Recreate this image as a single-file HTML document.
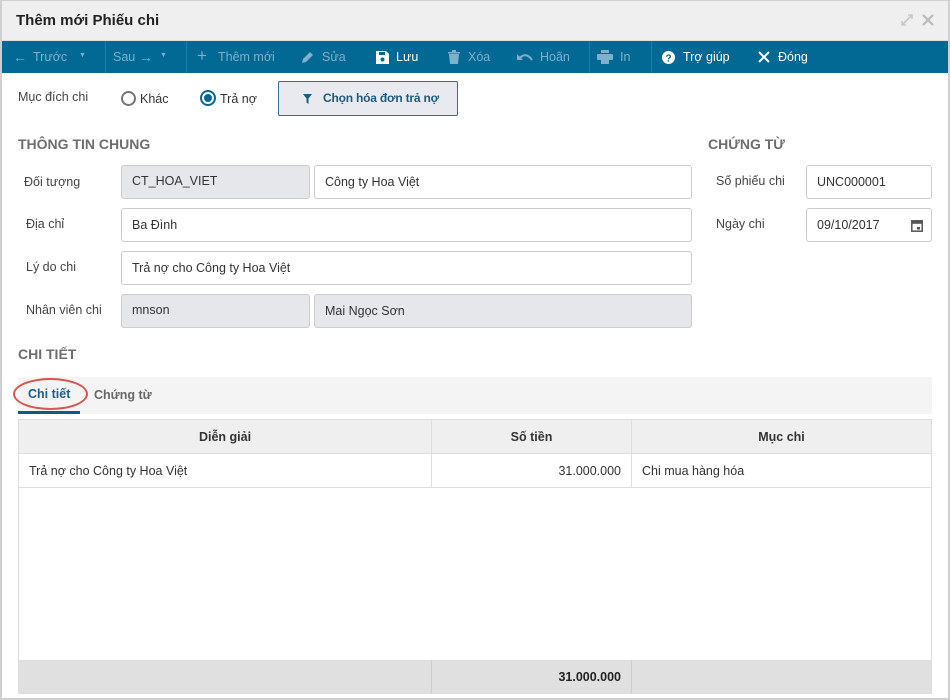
<!DOCTYPE html>
<html><head><meta charset="utf-8"><style>
*{box-sizing:border-box;margin:0;padding:0}
body{width:950px;height:700px;background:#fff;font-family:"Liberation Sans",Arial,sans-serif;font-size:12.5px;color:#333;position:relative;overflow:hidden}
.abs{position:absolute}
.win{position:absolute;left:0;top:0;width:950px;height:700px;border:2px solid #cfcfcf;border-top:1px solid #cfcfcf}
.title{left:2px;top:1px;width:946px;height:40px;background:#efefef;border-bottom:1px solid #ddd}
.title span{position:absolute;left:14px;top:11px;font-size:15px;font-weight:bold;color:#222}
.tb{left:2px;top:41px;width:946px;height:32px;background:#026894}
.tb .i{position:absolute;top:9px;font-size:12.5px;color:#7eb2cc;white-space:nowrap}
.tb .w{color:#fff}
.sep{position:absolute;top:0;width:1px;height:32px;background:#1d7ea7}
.inp{position:absolute;height:34px;border:1px solid #ccc;border-radius:3px;background:#fff;padding:0 10px;line-height:32px;font-size:12.5px;color:#333}
.dis{background:#e6e7eb}
.lbl{position:absolute;font-size:12.5px;color:#444}
.h{position:absolute;font-size:14px;font-weight:bold;color:#6e6e6e}
table{position:absolute;left:18px;top:419px;width:914px;border-collapse:collapse;font-size:12.5px}
td,th{border:1px solid #ddd;height:34px;padding:0 10px}
th{background:#efefef;font-weight:bold;color:#333}
</style></head><body>
<div class="win"></div>
<div class="abs title"><span>Thêm mới Phiếu chi</span>
<svg class="abs" style="left:898px;top:12px" width="14" height="14" viewBox="0 0 14 14"><path d="M2 12L12 2M8 2h4v4M2 8v4h4" stroke="#c8c8c8" stroke-width="1.6" fill="none"/></svg>
<svg class="abs" style="left:920px;top:13px" width="12" height="12" viewBox="0 0 12 12"><path d="M1 1L11 11M11 1L1 11" stroke="#b8b8b8" stroke-width="2"/></svg>
</div>
<div class="abs tb">
<div class="i" style="left:11px;top:8px;font-size:14px">←</div><div class="i" style="left:31px">Trước</div><div class="i" style="left:77px;top:11px;font-size:7px">▼</div>
<div class="sep" style="left:103px"></div>
<div class="i" style="left:111px">Sau</div><div class="i" style="left:137px;top:8px;font-size:14px">→</div><div class="i" style="left:158px;top:11px;font-size:7px">▼</div>
<div class="sep" style="left:184px"></div>
<div class="i" style="left:195px;font-size:17px;top:5px">+</div><div class="i" style="left:216px">Thêm mới</div>
<svg class="abs" style="left:299px;top:10px" width="13" height="13" viewBox="0 0 13 13"><path d="M1 12l1-4 7-7 3 3-7 7z" fill="#7eb2cc"/></svg><div class="i" style="left:320px">Sửa</div>
<svg class="abs" style="left:374px;top:10px" width="13" height="13" viewBox="0 0 13 13"><path d="M0 0h10l3 3v10H0z" fill="#fff"/><rect x="3" y="1" width="6" height="3" fill="#026894"/><circle cx="6.5" cy="8.5" r="2" fill="#026894"/></svg><div class="i w" style="left:394px">Lưu</div>
<svg class="abs" style="left:446px;top:9px" width="12" height="14" viewBox="0 0 12 14"><path d="M0 2h12v1.5H0zM4 0h4v2H4zM1 4h10l-1 10H2z" fill="#7eb2cc"/></svg><div class="i" style="left:466px">Xóa</div>
<svg class="abs" style="left:515px;top:11px" width="16" height="11" viewBox="0 0 16 11"><path d="M3 6c3-4 8-4 12 2" stroke="#7eb2cc" stroke-width="2" fill="none"/><path d="M0 2v6h6z" fill="#7eb2cc"/></svg><div class="i" style="left:538px">Hoãn</div>
<div class="sep" style="left:587px"></div>
<svg class="abs" style="left:595px;top:9px" width="16" height="14" viewBox="0 0 16 14"><rect x="4" y="0" width="8" height="3" fill="#7eb2cc"/><rect x="0" y="4" width="16" height="6" rx="1" fill="#7eb2cc"/><rect x="4" y="9" width="8" height="5" fill="#7eb2cc"/></svg><div class="i" style="left:618px">In</div>
<div class="sep" style="left:649px"></div>
<svg class="abs" style="left:660px;top:10px" width="13" height="13" viewBox="0 0 13 13"><circle cx="6.5" cy="6.5" r="6.5" fill="#fff"/><text x="6.5" y="10.5" font-size="10" font-weight="bold" text-anchor="middle" fill="#026894" font-family="Liberation Sans">?</text></svg><div class="i w" style="left:681px">Trợ giúp</div>
<svg class="abs" style="left:756px;top:10px" width="12" height="12" viewBox="0 0 12 12"><path d="M1 1L11 11M11 1L1 11" stroke="#fff" stroke-width="2"/></svg><div class="i w" style="left:776px">Đóng</div>
</div>
<div class="lbl" style="left:18px;top:90px">Mục đích chi</div>
<div class="abs" style="left:121px;top:91px;width:15px;height:15px;border:2px solid #777;border-radius:50%"></div>
<div class="lbl" style="left:140px;top:92px;color:#333">Khác</div>
<div class="abs" style="left:200px;top:90px;width:16px;height:16px;border:2px solid #026894;border-radius:50%"><div class="abs" style="left:2px;top:2px;width:8px;height:8px;border-radius:50%;background:#026894"></div></div>
<div class="lbl" style="left:220px;top:92px;color:#333">Trả nợ</div>
<div class="abs" style="left:278px;top:81px;width:180px;height:35px;background:#e8eaf0;border:1px solid #2f6f92;border-radius:2px;font-size:12px;font-weight:bold;color:#1d5a7e;line-height:33px;padding-left:44px;letter-spacing:-0.2px">Chọn hóa đơn trả nợ</div>
<svg class="abs" style="left:303px;top:94px" width="9" height="10" viewBox="0 0 9 10"><path d="M0 0h9L5.5 4.5V10L3.5 8.5V4.5z" fill="#1d5a7e"/></svg>
<div class="h" style="left:18px;top:136px">THÔNG TIN CHUNG</div>
<div class="h" style="left:708px;top:136px">CHỨNG TỪ</div>
<div class="lbl" style="left:24px;top:175px">Đối tượng</div>
<div class="inp dis" style="left:121px;top:165px;width:189px;line-height:30px">CT_HOA_VIET</div>
<div class="inp" style="left:314px;top:165px;width:378px">Công ty Hoa Việt</div>
<div class="lbl" style="left:26px;top:217px">Địa chỉ</div>
<div class="inp" style="left:121px;top:208px;width:571px">Ba Đình</div>
<div class="lbl" style="left:26px;top:260px">Lý do chi</div>
<div class="inp" style="left:121px;top:251px;width:571px">Trả nợ cho Công ty Hoa Việt</div>
<div class="lbl" style="left:26px;top:303px">Nhân viên chi</div>
<div class="inp dis" style="left:121px;top:294px;width:189px;line-height:30px">mnson</div>
<div class="inp dis" style="left:314px;top:294px;width:378px">Mai Ngọc Sơn</div>
<div class="lbl" style="left:716px;top:174px">Số phiếu chi</div>
<div class="inp" style="left:806px;top:165px;width:126px">UNC000001</div>
<div class="lbl" style="left:716px;top:217px">Ngày chi</div>
<div class="inp" style="left:806px;top:208px;width:126px">09/10/2017</div>
<svg class="abs" style="left:911px;top:219px" width="12" height="13" viewBox="0 0 12 13"><rect x="0.8" y="1.8" width="10.4" height="10.4" stroke="#555" stroke-width="1.5" fill="none"/><rect x="0.8" y="1.8" width="10.4" height="3" fill="#555"/><rect x="6" y="8" width="3" height="2.5" fill="#555"/></svg>
<div class="h" style="left:18px;top:346px">CHI TIẾT</div>
<div class="abs" style="left:18px;top:377px;width:914px;height:37px;background:#f4f4f4"></div>
<div class="abs" style="left:28px;top:387px;font-size:12.5px;font-weight:bold;color:#1c6188">Chi tiết</div>
<div class="abs" style="left:94px;top:388px;font-size:12.5px;font-weight:bold;color:#666">Chứng từ</div>
<div class="abs" style="left:18px;top:411px;width:62px;height:3px;background:#0d5d7e"></div>
<div class="abs" style="left:13px;top:378px;width:75px;height:32px;border:2px solid #d9534f;border-radius:50%"></div>
<div class="abs" style="left:18px;top:419px;width:914px;height:275px;border:1px solid #ddd"></div>
<table>
<tr><th style="width:413px">Diễn giải</th><th style="width:200px">Số tiền</th><th>Mục chi</th></tr>
<tr><td>Trả nợ cho Công ty Hoa Việt</td><td style="text-align:right">31.000.000</td><td>Chi mua hàng hóa</td></tr>
</table>
<div class="abs" style="left:18px;top:660px;width:914px;height:34px;background:#e0e0e0;border:1px solid #ddd"></div>
<div class="abs" style="left:431px;top:660px;width:1px;height:34px;background:#ccc"></div>
<div class="abs" style="left:631px;top:660px;width:1px;height:34px;background:#ccc"></div>
<div class="abs" style="left:431px;top:670px;width:190px;text-align:right;font-weight:bold;color:#222">31.000.000</div>
</body></html>
